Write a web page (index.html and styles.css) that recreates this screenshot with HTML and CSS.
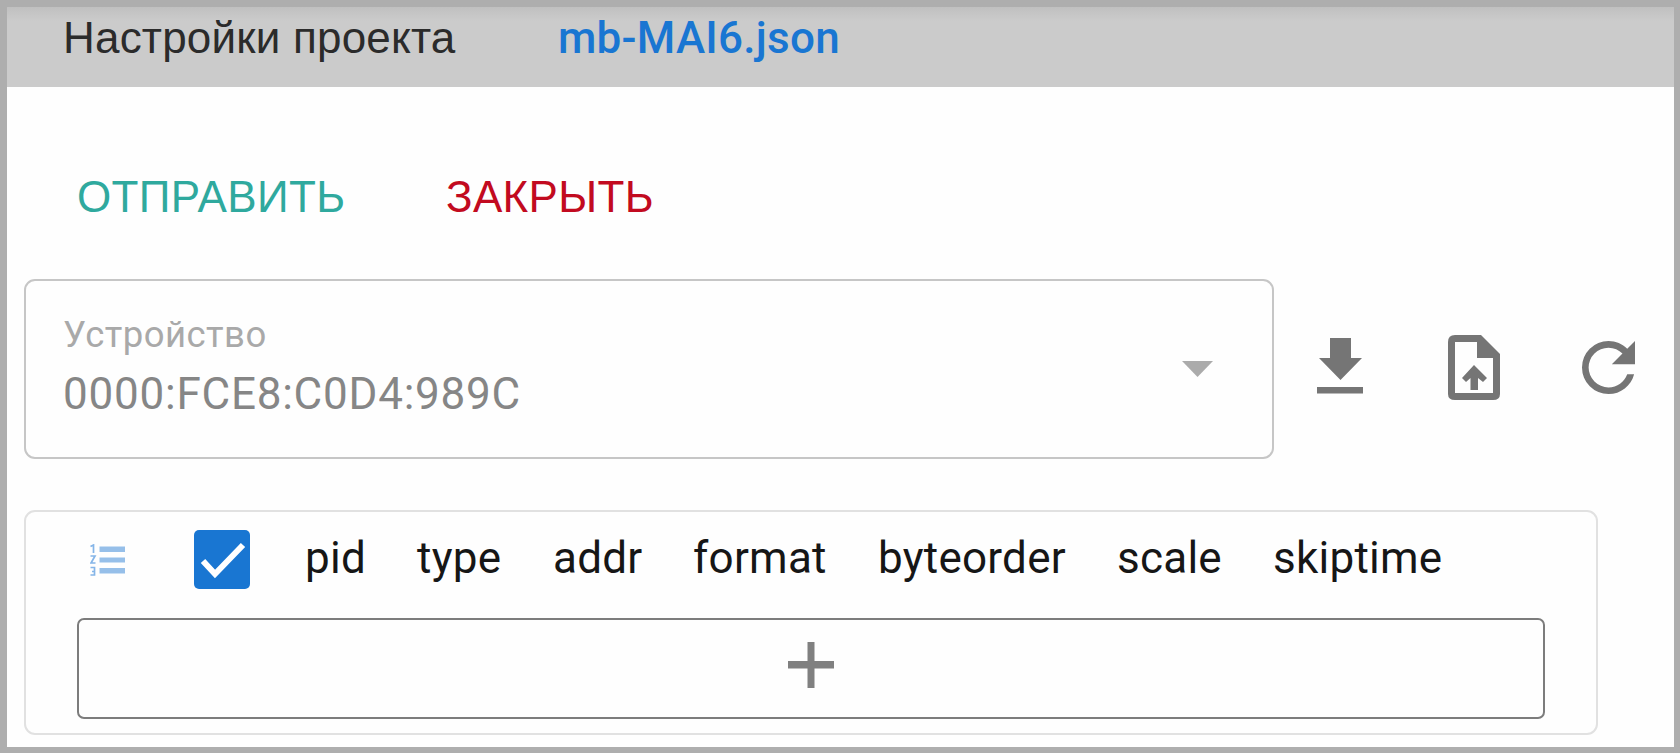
FILE: index.html
```
<!DOCTYPE html>
<html lang="ru">
<head>
<meta charset="utf-8">
<title>Настройки проекта</title>
<link rel="stylesheet" href="styles.css">
</head>
<body>
<main class="window">
  <header class="header">
    <span class="title">Настройки проекта</span>
    <span class="file">mb-MAI6.json</span>
  </header>
  <nav class="actions">
    <span class="send">ОТПРАВИТЬ</span>
    <span class="close">ЗАКРЫТЬ</span>
  </nav>
  <section class="device-row">
    <div class="select">
      <div class="select-text">
        <span class="label">Устройство</span>
        <span class="value">0000:FCE8:C0D4:989C</span>
      </div>
      <svg class="caret" viewBox="0 0 31 16"><path d="M0 0H31L15.5 16Z"/></svg>
    </div>
    <svg class="download" viewBox="0 0 48 56"><path d="M13 0H34V20H45L23.500 42L2 20H13ZM0 49H46V55.500H0Z"/></svg>
    <svg class="upload" viewBox="0 0 53 66"><path fill-rule="evenodd" d="M7 0H33L52 19V59Q52 65 45 65H7Q0 65 0 59V7Q0 0 7 0ZM7 7V58H45V23H29V7Z"/><path d="M26 30L39 43L35 47L30 43V55H22.500V43L18 47L14 43Z"/></svg>
    <svg class="refresh" viewBox="4 4 16 16"><path d="M17.650 6.350C16.200 4.900 14.210 4 12 4A8 8 0 0 0 4 12A8 8 0 0 0 12 20C15.730 20 18.840 17.450 19.730 14H17.650C16.830 16.330 14.610 18 12 18A6 6 0 0 1 6 12A6 6 0 0 1 12 6C13.660 6 15.140 6.690 16.220 7.780L13 11H20V4L17.650 6.350Z"/></svg>
  </section>
  <section class="table">
    <div class="columns">
      <svg class="list" viewBox="0 0 35 32"><path fill="#96bfe9" d="M9.500 2.500H35V8H9.500ZM9.500 13.500H35V18.500H9.500ZM9.500 24H35V29.500H9.500Z"/><path d="M.5 2.500L3.500 1V9M.5 12H5L1 19H5.500M.5 23.500H4.500V31H.5M2 27.500H4.500" fill="none" stroke="#85b5e8" stroke-width="1.700"/></svg>
      <svg class="check" viewBox="0 0 56 59"><rect width="56" height="59" rx="5" fill="#1976d2"/><path d="M9 31L21 44L49 15" fill="none" stroke="#fff" stroke-width="6"/></svg>
      <span>pid</span><span>type</span><span>addr</span><span>format</span><span>byteorder</span><span>scale</span><span>skiptime</span>
    </div>
    <div class="add"><svg viewBox="0 0 46 46"><path d="M19.500 0H26.500V19H46V26.500H26.500V46H19.500V26.500H0V19H19.500Z"/></svg></div>
  </section>
</main>
</body>
</html>
```
FILE: styles.css
```
* { box-sizing: border-box; }
body { margin: 0; font-family: Roboto, sans-serif; font-size: 44px; line-height: 52px; white-space: nowrap; }
svg { display: block; flex: none; fill: #757575; }
.window { width: 1680px; height: 753px; border: solid #aeaeae; border-width: 7px 6px 6px 7px; background: #fefefe; overflow: hidden; }
.header { height: 80px; padding: 5px 0 0 56px; display: flex; background: linear-gradient(#c0c0c0, #cbcbcb 14px); color: #2b2b2b; }
.title { width: 495px; font-family: "Liberation Sans", sans-serif; letter-spacing: .2px; }
.file { color: #1976d2; font-weight: 500; letter-spacing: .25px; }
.actions { display: flex; height: 192px; padding: 84px 0 0 70px; font-family: "Liberation Sans", sans-serif; letter-spacing: .35px; }
.send { width: 369px; color: #2fa99e; }
.close { color: #c20a20; }
.device-row { display: flex; align-items: flex-start; height: 231px; padding-left: 17px; }
.select { width: 1250px; height: 180px; border: 2px solid #c6c6c6; border-radius: 11px; padding: 28px 58px 0 37px; display: flex; justify-content: space-between; }
.select-text { display: flex; flex-direction: column; }
.label { height: 59px; font-size: 36.5px; letter-spacing: .45px; color: #a9a9a9; }
.value { color: #868686; letter-spacing: .77px; }
.caret { width: 33px; height: 16px; margin-top: 52px; fill: #ababab; }
.download { width: 48px; height: 56px; margin: 59px 0 0 43px; }
.upload { width: 53px; height: 66px; margin: 56px 0 0 83px; }
.refresh { width: 53px; height: 53px; margin: 62px 0 0 81px; }
.table { width: 1574px; height: 225px; margin-left: 17px; border: 2px solid #e1e1e1; border-radius: 11px; }
.columns { display: grid; grid-template-columns: 103.5px 111.5px 112px 136px 140px 185px 239px 156px auto; height: 106px; padding: 18px 0 0 64px; color: #161616; letter-spacing: .25px; }
.columns span { padding-top: 2px; }
.list { width: 35px; height: 32px; margin-top: 14px; }
.check { width: 56px; height: 59px; }
.add { width: 1468px; height: 101px; margin-left: 51px; border: 2px solid #7c7c7c; border-radius: 7px; display: flex; align-items: center; justify-content: center; }
.add svg { width: 46px; height: 46px; margin-bottom: 8px; fill: #808080; }
```
